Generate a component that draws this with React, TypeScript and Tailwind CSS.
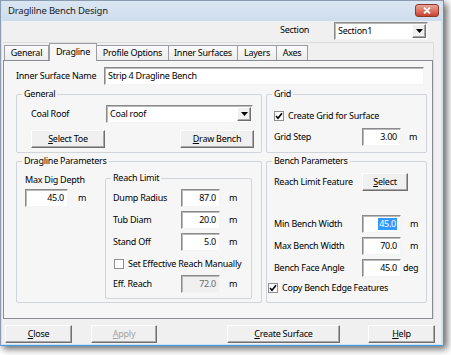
import React from 'react'

const sunken =
  'border border-t-[#8a8a8a] border-l-[#8a8a8a] border-r-[#f4f4f4] border-b-[#f4f4f4] shadow-[inset_1px_1px_0_#b9b9b9]'
const raised =
  'flex items-center justify-center bg-[#f0f0f0] border border-t-white border-l-white border-r-[#6f6f6f] border-b-[#6f6f6f] shadow-[inset_-1px_-1px_0_#a9a9a9]'

const U: React.FC<{ c: string }> = ({ c }) => <span className="underline underline-offset-[1px]">{c}</span>

const Field: React.FC<{ value: string; className?: string; disabled?: boolean; selected?: boolean }> = ({
  value,
  className = 'w-[39px]',
  disabled,
  selected,
}) => (
  <div
    className={`flex items-center justify-end pr-[3px] h-[18px] ${sunken} ${className} ${
      disabled ? 'bg-[#f0f0f0] text-[#6d6d6d]' : 'bg-white'
    }`}
  >
    {selected ? <span className="bg-[#3399ff] text-white px-[1px]">{value}</span> : value}
  </div>
)

const Combo: React.FC<{ value: string; className: string }> = ({ value, className }) => (
  <div className={`flex items-center bg-white h-[18px] ${sunken} ${className}`}>
    <span className="flex-1 pl-[3px]">{value}</span>
    <div className={`${raised} w-[14px] h-[14px] mr-[1px]`}>
      <svg width="7" height="4" viewBox="0 0 7 4">
        <path d="M0 0H7L3.5 4Z" fill="#000" />
      </svg>
    </div>
  </div>
)

const Check: React.FC<{ checked?: boolean; label: string }> = ({ checked, label }) => (
  <div className="flex items-center gap-[4px]">
    <div className="w-[10px] h-[10px] bg-white border border-[#8f8f8f] flex items-center justify-center">
      {checked && (
        <svg width="8" height="8" viewBox="0 0 8 8">
          <path d="M1 4L3 6.2L7 1.2" stroke="#000" strokeWidth="1.6" fill="none" />
        </svg>
      )}
    </div>
    <span>{label}</span>
  </div>
)

// padding goes on the inner div so the legend stays near the corner
const Group: React.FC<{ title: string; className: string; inner: string; children: React.ReactNode }> = ({
  title,
  className,
  inner,
  children,
}) => (
  <fieldset className={`border border-[#cfd5da] rounded-[2px] ${className}`}>
    <legend className="ml-[5px] px-[2px] leading-[12px]">{title}</legend>
    <div className={inner}>{children}</div>
  </fieldset>
)

const Row: React.FC<{ label: string; value: string; unit: string; lw: string; mt: string; disabled?: boolean; selected?: boolean }> = ({
  label,
  value,
  unit,
  lw,
  mt,
  disabled,
  selected,
}) => (
  <div className={`flex items-center ${mt}`}>
    <span className={lw}>{label}</span>
    <Field value={value} disabled={disabled} selected={selected} />
    <span className={unit === 'deg' ? 'ml-[2px]' : 'ml-[9px]'}>{unit}</span>
  </div>
)

const tabs = [
  { name: 'General', w: 'w-[45px]' },
  { name: 'Dragline', w: 'w-[48px]', active: true },
  { name: 'Profile Options', w: 'w-[72px]' },
  { name: 'Inner Surfaces', w: 'w-[69px]' },
  { name: 'Layers', w: 'w-[39px]' },
  { name: 'Axes', w: 'w-[31px]' },
]

const App: React.FC = () => {
  return (
    <div className="w-[451px] h-[355px] bg-white font-['Noto_Sans',sans-serif] text-[9px] tracking-[-0.25px] text-black leading-[12px] whitespace-nowrap">
      <div className="w-[444px] h-[346px] flex flex-col bg-[#d3e0ef] border border-l-[#8b9bb0] border-t-[#8b9bb0] border-r-[#3d9fe6] border-b-[#3d9fe6] pl-[1px] pr-[1px] shadow-[3px_3px_7px_rgba(0,0,0,0.6)]">
        {/* Title bar */}
        <div className="h-[20px] flex items-center bg-gradient-to-b from-[#dbe6f3] to-[#cddcee]">
          <span className="ml-[6px] text-[9.5px] tracking-[-0.2px] text-[#1b1b1b]">Draglilne Bench Design</span>
          <div className="ml-auto mr-[3px] mt-[-1px] w-[24px] h-[13px] rounded-[3px] border border-[#8c3a2e] bg-gradient-to-b from-[#e8a494] to-[#c8412f] flex items-center justify-center">
            <svg width="8" height="7" viewBox="0 0 8 7">
              <path d="M1 0.5L7 6.5M7 0.5L1 6.5" stroke="#fff" strokeWidth="1.8" />
            </svg>
          </div>
        </div>

        {/* Client */}
        <div className="w-[439px] h-[323px] bg-[#f0f0f0] flex flex-col">
          <div className="h-[21px] flex items-start pt-[1px] justify-end pr-[13px]">
            <span className="mt-[2px] w-[54px]">Section</span>
            <Combo value="Section1" className="w-[94px] h-[16px]" />
          </div>

          {/* Tab control */}
          <div className="ml-[1px] w-[431px] h-[277px] flex flex-col border-t border-r border-[#dcdcdc]">
            <div className="h-[17px] flex items-end pl-[1px]">
              {tabs.map((t) =>
                t.active ? (
                  <div
                    key={t.name}
                    className={`${t.w} h-[18px] mb-[-1px] relative z-10 bg-[#f6f6f6] border border-b-0 border-[#9a9da3] flex items-center justify-center pb-[1px]`}
                  >
                    {t.name}
                  </div>
                ) : (
                  <div
                    key={t.name}
                    className={`${t.w} h-[15px] bg-gradient-to-b from-[#fbfbfb] to-[#ececec] border border-b-0 border-l-0 first:border-l border-[#9a9da3] flex items-center justify-center`}
                  >
                    {t.name}
                  </div>
                ),
              )}
            </div>
            <div className="flex-1 bg-[#f6f6f6] border border-[#898c95] pl-[12px] pt-[6px]">
              <div className="flex items-center">
                <span className="w-[88px]">Inner Surface Name</span>
                <div className={`w-[320px] h-[18px] bg-white flex items-center pl-[3px] ${sunken}`}>
                  Strip 4 Dragline Bench
                </div>
              </div>

              <div className="flex gap-[4px] mt-[3px]">
                <Group title="General" className="w-[246px] h-[65px]" inner="pl-[14px] pt-[5px]">
                  <div className="flex items-center">
                    <span className="w-[75px]">Coal Roof</span>
                    <Combo value="Coal roof" className="w-[147px]" />
                  </div>
                  <div className="flex gap-[75px] mt-[7px]">
                    <div className={`${raised} w-[74px] h-[18px]`}>
                      <span>
                        <U c="S" />
                        elect Toe
                      </span>
                    </div>
                    <div className={`${raised} w-[74px] h-[18px]`}>
                      <span>
                        <U c="D" />
                        raw Bench
                      </span>
                    </div>
                  </div>
                </Group>
                <Group title="Grid" className="w-[161px] h-[65px]" inner="pl-[7px]">
                  <div className="mt-[9px] h-[14px] flex items-center">
                    <Check checked label="Create Grid for Surface" />
                  </div>
                  <div className="flex items-center mt-[5px]">
                    <span className="w-[88px]">Grid Step</span>
                    <Field value="3.00" />
                    <span className="ml-[8px]">m</span>
                  </div>
                </Group>
              </div>

              <div className="flex gap-[4px] mt-[2px]">
                <Group title="Dragline Parameters" className="w-[246px] h-[148px]" inner="pl-[8px] flex">
                  <div className="w-[80px] flex flex-col">
                    <span className="mt-[7px]">Max Dig Depth</span>
                    <div className="flex items-center mt-[3px]">
                      <Field value="45.0" className="w-[43px]" />
                      <span className="ml-[10px]">m</span>
                    </div>
                  </div>
                  <Group title="Reach Limit" className="w-[147px] h-[127px] mt-[5px]" inner="pl-[7px]">
                    <Row label="Dump Radius" value="87.0" unit="m" lw="w-[68px]" mt="mt-[5px]" />
                    <Row label="Tub Diam" value="20.0" unit="m" lw="w-[68px]" mt="mt-[4px]" />
                    <Row label="Stand Off" value="5.0" unit="m" lw="w-[68px]" mt="mt-[4px]" />
                    <div className="h-[16px] mt-[5px] flex items-center pl-[1px]">
                      <Check label="Set Effective Reach Manually" />
                    </div>
                    <Row label="Eff. Reach" value="72.0" unit="m" lw="w-[68px]" mt="mt-[3px]" disabled />
                  </Group>
                </Group>
                <Group title="Bench Parameters" className="w-[161px] h-[148px]" inner="pl-[7px]">
                  <div className="flex items-center mt-[6px]">
                    <span className="w-[88px]">Reach Limit Feature</span>
                    <div className={`${raised} w-[46px] h-[18px]`}>
                      <span>
                        <U c="S" />
                        elect
                      </span>
                    </div>
                  </div>
                  <Row label="Min Bench Width" value="45.0" unit="m" lw="w-[88px]" mt="mt-[24px]" selected />
                  <Row label="Max Bench Width" value="70.0" unit="m" lw="w-[88px]" mt="mt-[4px]" />
                  <Row label="Bench Face Angle" value="45.0" unit="deg" lw="w-[88px]" mt="mt-[4px]" />
                  <div className="h-[14px] mt-[4px] flex items-center ml-[-6px]">
                    <Check checked label="Copy Bench Edge Features" />
                  </div>
                </Group>
              </div>
            </div>
          </div>

          {/* Bottom buttons */}
          <div className="flex mt-[6px]">
            <div className={`${raised} ml-[3px] w-[67px] h-[18px]`}>
              <span>
                <U c="C" />
                lose
              </span>
            </div>
            <div className={`${raised} ml-[19px] w-[66px] h-[18px] text-[#a3a3a3]`}>
              <span>
                <U c="A" />
                pply
              </span>
            </div>
            <div className={`${raised} ml-[70px] w-[113px] h-[18px]`}>
              <span>
                <U c="C" />
                reate Surface
              </span>
            </div>
            <div className={`${raised} ml-[28px] w-[67px] h-[18px]`}>
              <span>
                <U c="H" />
                elp
              </span>
            </div>
          </div>
        </div>
      </div>
    </div>
  )
}

export default App
